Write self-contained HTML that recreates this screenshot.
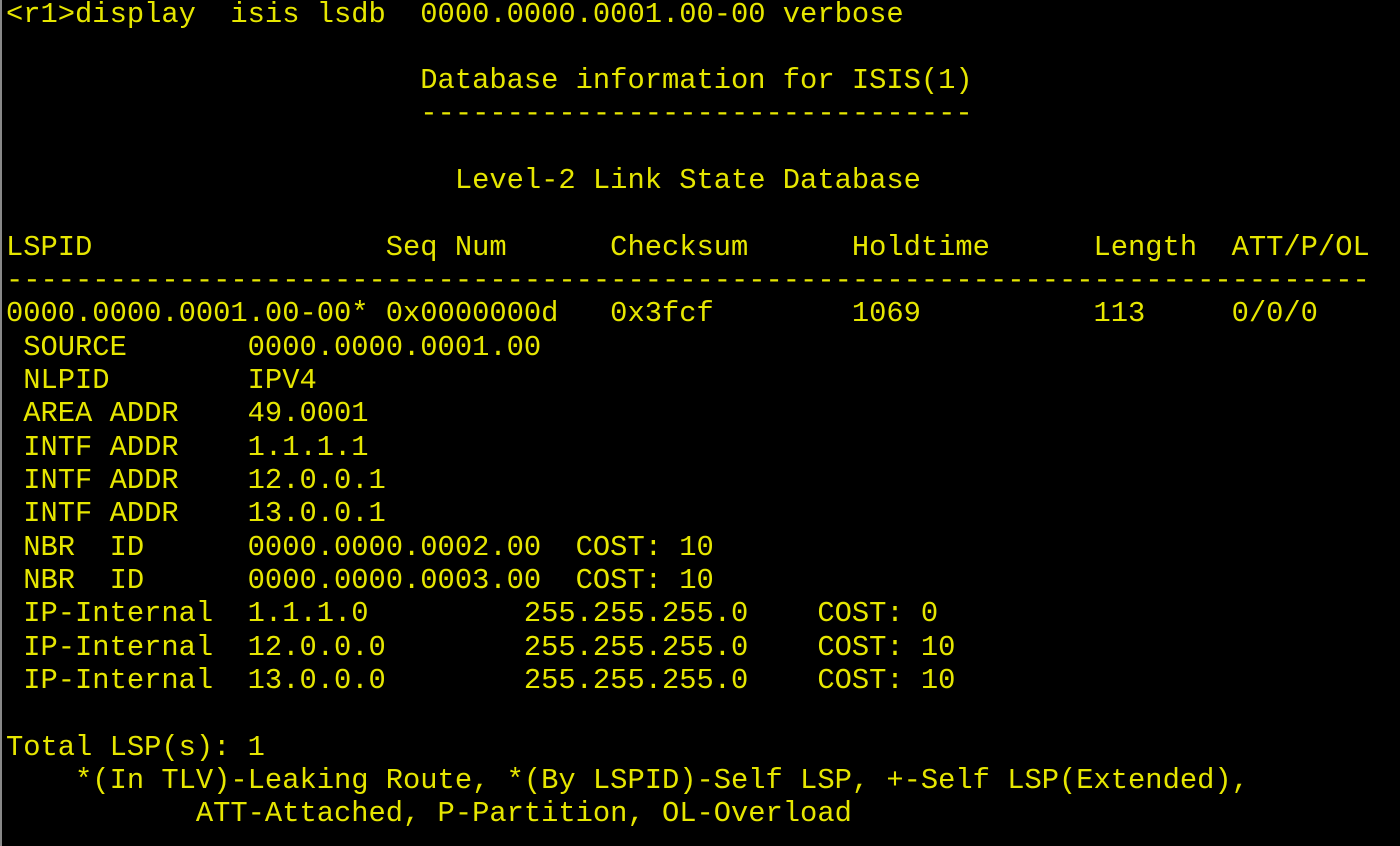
<!DOCTYPE html>
<html><head><meta charset="utf-8"><style>
html,body{margin:0;padding:0;background:#000;width:1400px;height:846px;overflow:hidden}
.b{position:absolute;left:0;top:0;width:2px;height:846px;background:#888}
pre{position:absolute;left:6px;top:-2.5px;margin:0;font-family:"Liberation Mono","Courier New",monospace;font-size:28.78px;line-height:33.33px;color:#e6e600;white-space:pre}
</style></head><body><div class="b"></div><pre>&lt;r1&gt;display  isis lsdb  0000.0000.0001.00-00 verbose

                        Database information for ISIS(1)
                        --------------------------------

                          Level-2 Link State Database

LSPID                 Seq Num      Checksum      Holdtime      Length  ATT/P/OL
-------------------------------------------------------------------------------
0000.0000.0001.00-00* 0x0000000d   0x3fcf        1069          113     0/0/0
 SOURCE       0000.0000.0001.00
 NLPID        IPV4
 AREA ADDR    49.0001
 INTF ADDR    1.1.1.1
 INTF ADDR    12.0.0.1
 INTF ADDR    13.0.0.1
 NBR  ID      0000.0000.0002.00  COST: 10
 NBR  ID      0000.0000.0003.00  COST: 10
 IP-Internal  1.1.1.0         255.255.255.0    COST: 0
 IP-Internal  12.0.0.0        255.255.255.0    COST: 10
 IP-Internal  13.0.0.0        255.255.255.0    COST: 10

Total LSP(s): 1
    *(In TLV)-Leaking Route, *(By LSPID)-Self LSP, +-Self LSP(Extended),
           ATT-Attached, P-Partition, OL-Overload</pre></body></html>
